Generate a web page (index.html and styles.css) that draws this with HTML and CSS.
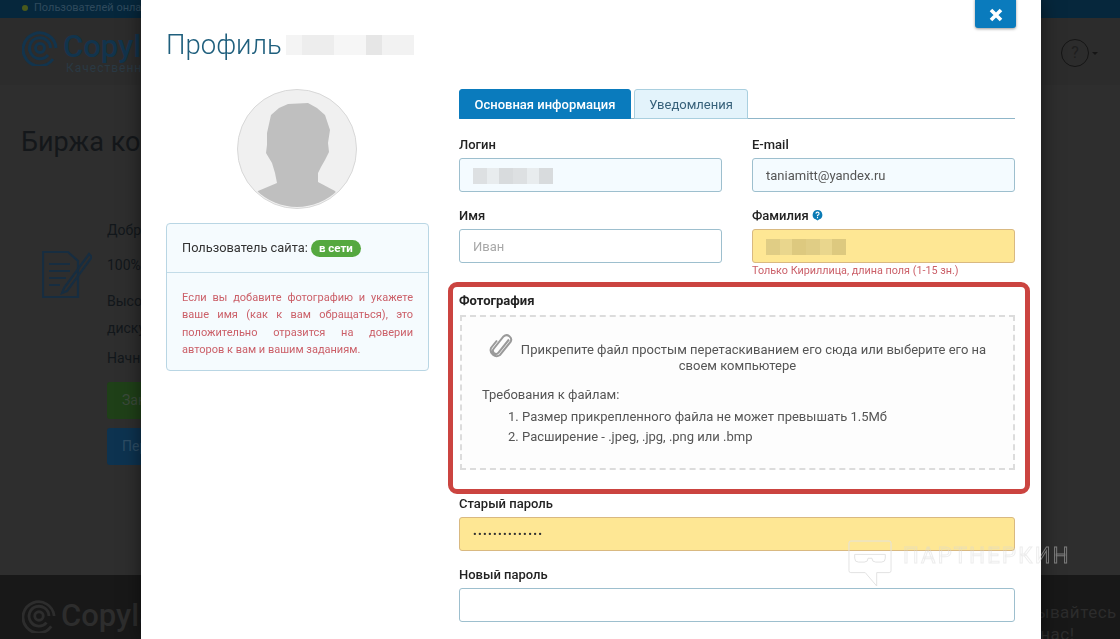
FILE: index.html
```html
<!DOCTYPE html>
<html lang="ru">
<head>
<meta charset="utf-8">
<title>Профиль</title>
<link rel="stylesheet" href="styles.css">
</head>
<body>
<div class="page">
  <div class="topbar"><span class="dot"></span>Пользователей онлайн</div>
  <header class="site-head">
    <div class="brand">
      <svg class="brand-logo" viewBox="0 0 36 36"><g fill="none" stroke="#12344d" stroke-width="3"><path d="M31 29A16.5 16.5 0 1 1 34 18"/><path d="M26 25A10.5 10.5 0 1 1 28.500 18"/><circle cx="18" cy="18" r="4.500"/></g></svg>
      <div><div class="brand-name">Copylancer</div><div class="brand-sub">Качественный контент</div></div>
    </div>
    <div class="help"><span class="help-ring">?</span><span class="caret"></span></div>
  </header>
  <main class="site-main">
    <h1 class="site-title">Биржа контента</h1>
    <section class="promo">
      <svg class="promo-icon" viewBox="0 0 50 50"><g fill="none" stroke="#172d40" stroke-width="2.200"><path d="M1 2H26L36 11V47H1Z"/><path d="M7 14H28M7 21H28M7 28H24M7 35H18"/><path d="M22 38L47 4L50 7L25 41L20 43Z"/></g></svg>
      <div class="promo-body">
        <p class="promo-line first">Добро пожаловать</p>
        <p class="promo-line second">100% уникальный</p>
        <p class="promo-line tight">Высокое качество</p>
        <p class="promo-line fourth">дискуссии</p>
        <p class="promo-line">Начните</p>
        <div class="promo-btn green">Заказать</div>
        <div class="promo-btn blue">Перейти</div>
      </div>
    </section>
  </main>
  <footer class="site-foot">
    <svg class="foot-logo" viewBox="0 0 36 36"><g fill="none" stroke="#2d2d2d" stroke-width="3"><path d="M31 29A16.500 16.500 0 1 1 34 18"/><path d="M26 25A10.500 10.500 0 1 1 28.500 18"/><circle cx="18" cy="18" r="4.500"/></g></svg>
    <span class="foot-name">Copylancer</span>
    <div class="foot-note">Подписывайтесь<br>на нас!</div>
  </footer>
</div>

<div class="modal">
  <button class="close" type="button" aria-label="Закрыть"><svg viewBox="0 0 14 14" width="14" height="14"><path d="M2 2L12 12M12 2L2 12" stroke="#fff" stroke-width="3.600" fill="none"/></svg></button>
  <h2 class="modal-title">Профиль <span class="mosaic mosaic-title"></span></h2>
  <div class="modal-grid">
    <aside class="side">
      <svg class="avatar" viewBox="0 0 120 120">
        <defs><clipPath id="round"><circle cx="60" cy="60" r="58"/></clipPath></defs>
        <circle cx="60" cy="60" r="59.500" fill="#f0f0f0" stroke="#d8d8d8"/>
        <path clip-path="url(#round)" fill="#bfbfbf" d="M51 15L71 14L80 19L88 26L93 41L91 54L92 63L88 71L84 78L81 84V93L98 102L110 120H10L21 102L40 94L38 84L35 74L29 64L30 56L30 44L34 26L42 19Z"/>
      </svg>
      <div class="info">
        <div class="info-head">Пользователь сайта: <span class="badge">в сети</span></div>
        <p class="info-text">Если вы добавите фотографию и укажете ваше имя (как к вам обращаться), это положительно отразится на доверии авторов к вам и вашим заданиям.</p>
      </div>
    </aside>
    <div class="form">
      <nav class="tabs">
        <span class="tab active">Основная информация</span>
        <span class="tab">Уведомления</span>
      </nav>
      <div class="row">
        <div class="field">
          <label class="label">Логин</label>
          <div class="input tinted"><span class="mosaic mosaic-field"></span></div>
        </div>
        <div class="field">
          <label class="label">E-mail</label>
          <div class="input tinted">taniamitt@yandex.ru</div>
        </div>
      </div>
      <div class="row">
        <div class="field">
          <label class="label">Имя</label>
          <div class="input placeholder">Иван</div>
        </div>
        <div class="field">
          <label class="label">Фамилия <svg class="hint-icon" viewBox="0 0 12 12"><path fill="#0a7bb5" d="M6 0.500A5.300 5.300 0 0 1 8 10.700L6 12L4 10.700A5.300 5.300 0 0 1 6 0.500Z"/><path d="M4.300 4.500A1.700 1.700 0 1 1 6 6.300V7.300M6 8.200V9.500" stroke="#fff" stroke-width="1.200" fill="none"/></svg></label>
          <div class="input warm"><span class="mosaic mosaic-warm"></span></div>
          <div class="hint">Только Кириллица, длина поля (1-15 зн.)</div>
        </div>
      </div>
      <div class="photo">
        <label class="label photo-label">Фотография</label>
        <div class="drop">
          <p class="drop-lead"><svg class="clip" viewBox="0 0 24 24"><path d="M20 5.500L9.500 18.500A3 3 0 0 1 4.500 15L14.500 2.500A4.500 4.500 0 0 1 21.500 8L11 21A6 6 0 0 1 2 14L8 6.500" fill="none" stroke="#9a9a9a" stroke-width="2"/></svg>Прикрепите файл простым перетаскиванием его сюда или выберите его на своем компьютере</p>
          <p class="drop-req">Требования к файлам:</p>
          <ol class="drop-list">
            <li>Размер прикрепленного файла не может превышать 1.5Мб</li>
            <li>Расширение - .jpeg, .jpg, .png или .bmp</li>
          </ol>
        </div>
        <div class="highlight"></div>
      </div>
      <div class="field">
        <label class="label">Старый пароль</label>
        <div class="input warm dots">••••••••••••••</div>
      </div>
      <div class="field">
        <label class="label">Новый пароль</label>
        <div class="input"></div>
      </div>
    </div>
  </div>
</div>

<div class="watermark">
  <svg class="wm-icon" viewBox="0 0 46 50"><g fill="none" stroke="#e2e2e2" stroke-width="1"><path d="M3 1H43A2 2 0 0 1 45 3V32A2 2 0 0 1 43 34H30V48L18 34H3A2 2 0 0 1 1 32V3A2 2 0 0 1 3 1Z"/><path d="M7 15H39V19A4 4 0 0 1 35 23H29A4 4 0 0 1 25 19H21A4 4 0 0 1 17 23H11A4 4 0 0 1 7 19Z"/></g></svg>
  <span class="wm-text">ПАРТНЕРКИН</span>
</div>
</body>
</html>
```
FILE: styles.css
```css
* { box-sizing: border-box; }
html, body { margin: 0; height: 639px; overflow: hidden; }
body { font-family: "Roboto", "Liberation Sans", sans-serif; font-size: 13px; color: #333; background: #2d2d2d; }
p { margin: 0; }

.page { height: 639px; display: flex; flex-direction: column; color: #15181b; }
.topbar { height: 18px; background: #06273c; color: #2f4a5c; font-size: 11px; line-height: 15px; padding-left: 22px; display: flex; align-items: flex-start; gap: 6px; }
.dot { width: 6px; height: 6px; margin-top: 5px; border-radius: 50%; background: #4a5a1c; }
.site-head { height: 67px; background: #2c2c2c; display: flex; justify-content: space-between; padding: 12px 22px 0 22px; }
.brand { display: flex; gap: 5px; }
.brand-logo { width: 36px; height: 36px; }
.brand-name { font-size: 31px; line-height: 34px; font-weight: 500; color: #12344d; }
.brand-sub { font-size: 12px; line-height: 11px; margin: -1px 0 0 3px; color: #2a3943; letter-spacing: 1px; white-space: nowrap; }
.help { display: flex; align-items: center; gap: 3px; height: 46px; }
.help-ring { width: 28px; height: 28px; border: 1.500px solid #151515; border-radius: 50%; text-align: center; line-height: 25px; font-size: 16px; color: #1e1e1e; }
.caret { border: 3px solid transparent; border-top-color: #151515; border-bottom: 0; }
.site-main { flex: 1; background: #2e2e2e; padding: 40px 0 0 21px; }
.site-title { margin: 0 0 42px; font-size: 27px; line-height: 34px; font-weight: 400; color: #14171a; white-space: nowrap; }
.promo { display: flex; padding-top: 22px; }
.promo-icon { width: 50px; height: 50px; margin: 27px 15px 0 21px; }
.promo-line { font-size: 14px; line-height: 20px; margin-bottom: 14px; color: #12171b; white-space: nowrap; }
.promo-line.first { margin-top: -4px; margin-bottom: 15px; }
.promo-line.second { margin-bottom: 16px; }
.promo-line.tight { margin-bottom: 7px; }
.promo-line.fourth { margin-bottom: 10px; }
.promo-body { padding-top: 1px; }
.promo-btn { width: 120px; height: 37px; margin-bottom: 9px; border-radius: 3px; padding: 10px 15px; font-size: 14px; color: #3b4a3b; }
.promo-btn.green { background: #1f4018; margin-top: 13px; }
.promo-btn.blue { background: #0d3350; color: #2d4d65; }
.site-foot { height: 64px; background: #181818; display: flex; gap: 5px; padding: 24px 0 0 22px; color: #2d2d2d; }
.foot-logo { width: 34px; height: 34px; }
.foot-name { font-size: 31px; line-height: 34px; font-weight: 500; }
.foot-note { margin-left: auto; width: 150px; flex: none; white-space: nowrap; font-size: 17px; line-height: 22px; letter-spacing: 0.500px; text-align: center; color: #2c2c2c; padding-top: 2px; }

.modal { position: fixed; top: 0; left: 141px; width: 900px; height: 639px; overflow: hidden; background: #fff; padding: 0 26px 0 25px; box-shadow: 0 0 18px rgba(0,0,0,.5); }
.close { position: absolute; top: -3px; right: 25px; width: 41px; height: 31px; padding: 4px 0 0; border: 0; border-radius: 3px; background: #0a7bbd; box-shadow: 0 1px 3px rgba(0,0,0,.4); display: flex; align-items: center; justify-content: center; }
.modal-title { margin: 0; padding-top: 28px; height: 89px; font-size: 27.500px; line-height: 34px; font-weight: 300; color: #1f5f7d; display: flex; align-items: flex-start; gap: 4px; }

.mosaic { display: inline-block; background: repeating-linear-gradient(90deg, #dde0e2 0 14px, #e8ecee 14px 26px, #d8dbdd 26px 40px); }
.mosaic-title { width: 128px; height: 20px; margin-top: 7px; background: repeating-linear-gradient(90deg, #f4f4f4 0 16px, #ededed 16px 48px, #f6f6f6 48px 80px, #e6e6e6 80px 96px, #f2f2f2 96px 128px); }
.mosaic-field { width: 80px; height: 16px; }
.mosaic-warm { width: 80px; height: 16px; background: repeating-linear-gradient(90deg, #e0cd85 0 14px, #e9d68d 14px 26px, #ddc97f 26px 40px); }

.modal-grid { display: grid; grid-template-columns: 263px 556px; column-gap: 30px; }
.side { display: flex; flex-direction: column; align-items: center; }
.avatar { width: 120px; height: 120px; margin: 0 1px 14px 0; }
.info { width: 100%; height: 148px; background: #f5fbfe; border: 1px solid #b9d6e4; border-radius: 4px; }
.info-head { height: 49px; padding: 15px 15px 0; font-size: 12.800px; line-height: 17px; color: #333; border-bottom: 1px solid #c3dce8; white-space: nowrap; }
.badge { display: inline-block; padding: 0 8px; height: 17px; line-height: 17px; border-radius: 9px; background: #55a83f; color: #fff; font-size: 11.500px; font-weight: 700; }
.info-text { padding: 16px 15px 0; font-size: 11px; line-height: 17.300px; color: #cb5f68; text-align: justify; }

.tabs { height: 30px; display: flex; gap: 3px; border-bottom: 1px solid #8fb6c9; margin-bottom: 19px; }
.tab { height: 30px; width: 114px; background: #e3f3fb; border: 1px solid #a9cfdf; border-radius: 3px 3px 0 0; color: #37617a; text-align: center; line-height: 29px; }
.tab.active { width: 172px; background: #0a7bbd; border-color: #0a7bbd; color: #fff; font-weight: 500; }

.row { display: grid; grid-template-columns: 263px 263px; column-gap: 30px; }
.field { margin-bottom: 17px; min-width: 0; }
.row + .row .field { margin-bottom: 0; }
.label { display: block; height: 20px; line-height: 14px; font-size: 13px; font-weight: 500; color: #222; }
.hint-icon { width: 11px; height: 12px; vertical-align: -1px; }
.input { height: 34px; border: 1px solid #9dbfce; border-radius: 3px; background: #fff; padding: 1px 13px 0; font-size: 13px; color: #555; display: flex; align-items: center; }
.input.tinted { background: #f4fbff; }
.input.warm { background: #fee794; border-color: #d9b981; }
.input.placeholder { color: #a8a8a8; }
.input.dots { font-size: 11px; letter-spacing: 1.300px; color: #333; }
.hint { height: 13px; margin-top: 1px; font-size: 10.800px; line-height: 13px; color: #cb5f68; }

.photo { position: relative; margin: 17px 0 27px; }
.photo-label { height: 21px; font-weight: 700; }
.drop { height: 155px; margin-left: 1px; border: 2px dashed #dcdcdc; padding: 25px 20px 0; background: #fdfdfd; }
.drop-lead { text-align: center; line-height: 16px; font-size: 13px; color: #555; }
.clip { width: 24px; height: 24px; vertical-align: 0; margin: -12px 8px -4px 0; }
.drop-req { margin-top: 12px; font-size: 13px; line-height: 17px; color: #555; }
.drop-list { margin: 4px 0 0; padding-left: 40px; font-size: 13px; line-height: 20px; color: #555; }
.highlight { position: absolute; left: -11px; right: -15px; top: -12px; height: 212px; border: 5px solid #cb4440; border-radius: 9px; pointer-events: none; }

.watermark { position: fixed; left: 848px; top: 540px; display: flex; gap: 11px; pointer-events: none; }
.wm-icon { width: 44px; height: 48px; }
.wm-text { font-size: 22px; line-height: 32px; letter-spacing: 2.300px; color: transparent; -webkit-text-stroke: 1px rgba(215,215,215,.45); }
```
